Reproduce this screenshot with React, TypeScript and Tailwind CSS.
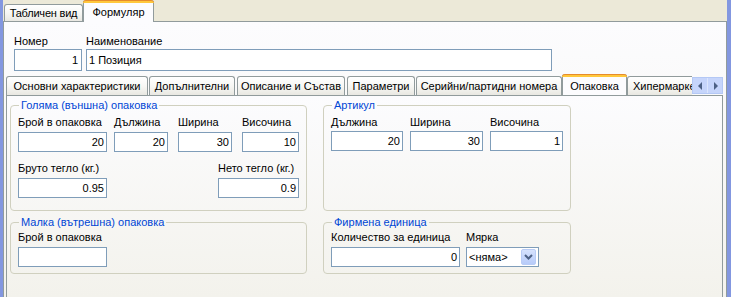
import React from "react";

function Field({ cls, value, h = "h-[20px]" }: { cls: string; value?: string; h?: string }) {
  return (
    <div
      className={`${cls} ${h} border border-[#7F9DB9] bg-white flex items-center justify-end pr-[2px] leading-[13px] shrink-0`}
    >
      {value}
    </div>
  );
}

function Lbl({ children, cls = "" }: { children: React.ReactNode; cls?: string }) {
  return <div className={`h-[13px] leading-[13px] whitespace-nowrap ${cls}`}>{children}</div>;
}

function Tab({ label, cls }: { label: string; cls: string }) {
  return (
    <div
      className={`${cls} h-[19px] shrink-0 border border-b-0 border-[#919B9C] rounded-t-[3px] bg-linear-to-b from-white via-[#F7F7F4] to-[#E9E8E2] flex items-center justify-center whitespace-nowrap overflow-hidden leading-[13px]`}
    >
      {label}
    </div>
  );
}

function SelTab({ label, cls }: { label: string; cls: string }) {
  return (
    <div
      className={`${cls} h-[22px] -mb-px relative z-10 shrink-0 bg-[#FCFCFE] border-x border-[#919B9C] rounded-t-[3px] flex flex-col`}
    >
      <div className="h-[3px] -mx-px rounded-t-[3px] border-t border-[#E68B2C] bg-[#FFC83C]" />
      <div className="flex-1 flex items-center justify-center leading-[13px] whitespace-nowrap">{label}</div>
    </div>
  );
}

function Group({ title, cls, children }: { title: string; cls: string; children: React.ReactNode }) {
  return (
    <fieldset className={`${cls} border border-[#D0D0BF] rounded-[4px] px-[7px]`}>
      <legend className="ml-[1px] px-[2px] leading-[13px] text-[#0046D5]">{title}</legend>
      {children}
    </fieldset>
  );
}

export default function App() {
  return (
    <div className="w-[731px] h-[297px] overflow-hidden flex bg-[#ECE9D8] text-[11px] text-black font-['Liberation_Sans',Arial,sans-serif]">
      <div className="w-[3px] shrink-0 bg-[#8397E0]" />
      <div className="w-[724px] shrink-0 flex flex-col h-full">
        {/* top tabs */}
        <div className="flex items-end h-[21px] pl-[1px] shrink-0">
          <div className="w-[79px] h-[17px] border border-b-0 border-[#919B9C] rounded-t-[3px] bg-linear-to-b from-white via-[#F7F7F4] to-[#E9E8E2] flex items-center justify-center leading-[13px] whitespace-nowrap tracking-[-0.2px]">
            Табличен вид
          </div>
          <SelTab label="Формуляр" cls="w-[71px]" />
        </div>
        {/* outer page */}
        <div className="flex-1 min-h-0 border border-b-0 border-[#919B9C] bg-linear-to-b from-[#FCFCFE] to-[#F4F3EE] flex flex-col">
          <div className="pl-[10px] pt-[13px] flex gap-[4px] shrink-0">
            <div className="w-[68px]">
              <Lbl>Номер</Lbl>
              <Field cls="w-[68px] mt-[1px] pr-[3px]" h="h-[22px]" value="1" />
            </div>
            <div className="w-[466px]">
              <Lbl>Наименование</Lbl>
              <div className="w-[466px] mt-[1px] h-[22px] border border-[#7F9DB9] bg-white flex items-center pl-[2px] leading-[13px]">
                1 Позиция
              </div>
            </div>
          </div>
          {/* inner tab control */}
          <div className="mt-[3px] ml-[2px] mr-[3px] flex-1 min-h-0 flex flex-col">
            <div className="h-[21px] flex items-end shrink-0">
              <div className="flex-1 min-w-0 flex items-end overflow-hidden h-full">
                <Tab label="Основни характеристики" cls="w-[142px]" />
                <Tab label="Допълнителни" cls="w-[86px] ml-[1px]" />
                <Tab label="Описание и Състав" cls="w-[108px] ml-[2px]" />
                <Tab label="Параметри" cls="w-[68px] ml-[2px]" />
                <Tab label="Серийни/партидни номера" cls="w-[146px] ml-[1px]" />
                <SelTab label="Опаковка" cls="w-[65px]" />
                <div className="w-[80px] h-[19px] shrink-0 border border-b-0 border-[#919B9C] rounded-t-[3px] bg-linear-to-b from-white via-[#F7F7F4] to-[#E9E8E2] flex items-center pl-[5px] whitespace-nowrap overflow-hidden leading-[13px]">
                  Хипермаркет
                </div>
              </div>
              <div className="w-[31px] h-[17px] mb-[1px] shrink-0 flex bg-[#C6D5FB] border border-[#B4C8F5]">
                <div className="flex-1 flex items-center justify-center border-r border-[#DCE6FD]">
                  <svg width="5" height="8" viewBox="0 0 5 8">
                    <polygon points="4,0 4,8 0,4" fill="#4D6185" />
                  </svg>
                </div>
                <div className="flex-1 flex items-center justify-center">
                  <svg width="5" height="8" viewBox="0 0 5 8">
                    <polygon points="1,0 1,8 5,4" fill="#4D6185" />
                  </svg>
                </div>
              </div>
            </div>
            {/* inner page */}
            <div className="flex-1 min-h-0 border border-b-0 border-[#919B9C] bg-linear-to-b from-[#FCFCFE] to-[#F3F2EC] flex pl-[3px] pt-[3px]">
              <div className="w-[297px] flex flex-col shrink-0">
                <Group title="Голяма (външна) опаковка" cls="w-[297px] pt-[4px] pb-[12px]">
                  <div className="flex">
                    <div className="w-[89px]">
                      <Lbl>Брой в опаковка</Lbl>
                      <Field cls="w-[89px] mt-[3px]" value="20" />
                    </div>
                    <div className="w-[54px] ml-[7px]">
                      <Lbl>Дължина</Lbl>
                      <Field cls="w-[54px] mt-[3px]" value="20" />
                    </div>
                    <div className="w-[54px] ml-[10px]">
                      <Lbl>Ширина</Lbl>
                      <Field cls="w-[54px] mt-[3px]" value="30" />
                    </div>
                    <div className="w-[57px] ml-[10px]">
                      <Lbl>Височина</Lbl>
                      <Field cls="w-[57px] mt-[3px]" value="10" />
                    </div>
                  </div>
                  <div className="flex justify-between mt-[10px]">
                    <div className="w-[89px]">
                      <Lbl>Бруто тегло (кг.)</Lbl>
                      <Field cls="w-[89px] mt-[3px]" value="0.95" />
                    </div>
                    <div className="w-[81px]">
                      <Lbl>Нето тегло (кг.)</Lbl>
                      <Field cls="w-[81px] mt-[3px]" value="0.9" />
                    </div>
                  </div>
                </Group>
                <Group title="Малка (вътрешна) опаковка" cls="w-[297px] mt-[5px] pt-[2px] pb-[6px]">
                  <Lbl>Брой в опаковка</Lbl>
                  <Field cls="w-[89px] mt-[3px]" />
                </Group>
              </div>
              <div className="w-[248px] ml-[16px] flex flex-col shrink-0">
                <Group title="Артикул" cls="w-[248px] h-[112px] pt-[4px]">
                  <div className="flex gap-[7px]">
                    <div className="w-[72px]">
                      <Lbl>Дължина</Lbl>
                      <Field cls="w-[72px] mt-[2px]" value="20" />
                    </div>
                    <div className="w-[73px]">
                      <Lbl>Ширина</Lbl>
                      <Field cls="w-[73px] mt-[2px]" value="30" />
                    </div>
                    <div className="w-[73px]">
                      <Lbl>Височина</Lbl>
                      <Field cls="w-[73px] mt-[2px]" value="1" />
                    </div>
                  </div>
                </Group>
                <Group title="Фирмена единица" cls="w-[248px] mt-[5px] pt-[2px] pb-[6px]">
                  <div className="flex gap-[6px]">
                    <div className="w-[129px]">
                      <Lbl>Количество за единица</Lbl>
                      <Field cls="w-[129px] mt-[3px]" value="0" />
                    </div>
                    <div className="w-[73px]">
                      <Lbl>Мярка</Lbl>
                      <div className="w-[73px] h-[20px] mt-[3px] border border-[#7F9DB9] bg-white flex items-center pl-[2px] pr-[2px]">
                        <span className="leading-[13px]">&lt;няма&gt;</span>
                        <div className="ml-auto w-[15px] h-[16px] rounded-[2px] border border-[#B9CCF6] bg-linear-to-b from-[#D6E2FD] to-[#B7CBF9] flex items-center justify-center">
                          <svg width="9" height="6" viewBox="0 0 9 6">
                            <polyline points="1,1 4.5,4.5 8,1" fill="none" stroke="#4D6185" strokeWidth="2" />
                          </svg>
                        </div>
                      </div>
                    </div>
                  </div>
                </Group>
              </div>
            </div>
          </div>
        </div>
      </div>
      <div className="w-[4px] shrink-0 bg-[#8397E0]" />
    </div>
  );
}
